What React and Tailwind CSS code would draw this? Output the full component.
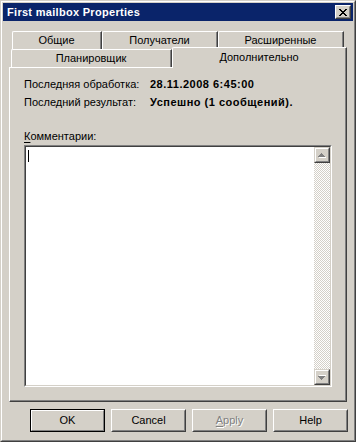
import React from 'react';

const CloseGlyph = () => {
  const px = [
    [0, 0], [1, 0], [6, 0], [7, 0],
    [1, 1], [2, 1], [5, 1], [6, 1],
    [2, 2], [3, 2], [4, 2], [5, 2],
    [3, 3], [4, 3],
    [2, 4], [3, 4], [4, 4], [5, 4],
    [1, 5], [2, 5], [5, 5], [6, 5],
    [0, 6], [1, 6], [6, 6], [7, 6],
  ];
  return (
    <svg width="8" height="7" viewBox="0 0 8 7" shapeRendering="crispEdges">
      {px.map(([x, y]) => (
        <rect key={`${x}-${y}`} x={x} y={y} width="1" height="1" fill="#000" />
      ))}
    </svg>
  );
};

const Arrow = ({ down }) => (
  <svg width="8" height="5" viewBox="0 0 8 5" shapeRendering="crispEdges">
    <g transform={down ? 'translate(0,5) scale(1,-1)' : undefined}>
      <polygon points="4,1 8,5 1,5" fill="#ffffff" />
      <polygon points="3,0 7,4 0,4" fill="#808080" />
    </g>
  </svg>
);

const ScrollBtn = ({ down }) => (
  <div className="w-[16px] h-[16px] border border-t-[#d4d0c8] border-l-[#d4d0c8] border-r-[#404040] border-b-[#404040]">
    <div className="h-full bg-[#d4d0c8] flex items-center justify-center border border-t-white border-l-white border-r-[#808080] border-b-[#808080]">
      <Arrow down={down} />
    </div>
  </div>
);

const Button = ({ children, def, disabled }) => (
  <div
    className={`w-[75px] h-[23px] border ${
      def
        ? 'border-black'
        : 'border-t-white border-l-white border-r-[#404040] border-b-[#404040]'
    }`}
  >
    <div
      className={`h-full flex items-center justify-center border ${
        def
          ? 'border-t-white border-l-white border-r-[#808080] border-b-[#808080]'
          : 'border-t-[#d4d0c8] border-l-[#d4d0c8] border-r-[#808080] border-b-[#808080]'
      } ${disabled ? 'text-[#808080] [text-shadow:1px_1px_0_#ffffff]' : 'text-black'}`}
    >
      {children}
    </div>
  </div>
);

const Tab = ({ label, w }) => (
  <div
    className={`${w} h-[18px] flex border-t border-l border-t-white border-l-white border-r border-r-[#404040] rounded-tl-[2px]`}
  >
    <div className="flex-1 flex items-center justify-center border-r border-r-[#808080] pb-[1px]">
      {label}
    </div>
  </div>
);

export default function App() {
  return (
    <div className="w-[356px] h-[442px] bg-[#d4d0c8] font-['Liberation_Sans',Arial,sans-serif] text-[11px] leading-[13px] text-black">
      <div className="h-full border border-t-[#d4d0c8] border-l-[#d4d0c8] border-r-[#404040] border-b-[#404040]">
        <div className="h-full border border-t-white border-l-white border-r-[#808080] border-b-[#808080] p-[1px] flex flex-col">
          {/* title bar */}
          <div className="h-[18px] bg-[#0a246a] flex items-center justify-between pl-[4px] pr-[2px]">
            <span className="text-white font-bold tracking-[0.3px]">First mailbox Properties</span>
            <div className="w-[16px] h-[14px] border border-t-white border-l-white border-r-[#404040] border-b-[#404040]">
              <div className="h-full bg-[#d4d0c8] flex items-center justify-center border border-t-[#d4d0c8] border-l-[#d4d0c8] border-r-[#808080] border-b-[#808080]">
                <CloseGlyph />
              </div>
            </div>
          </div>

          {/* tabs */}
          <div className="px-[6px] pt-[10px]">
            <div className="flex pl-[3px]">
              <Tab label="Общие" w="w-[90px]" />
              <Tab label="Получатели" w="w-[116px]" />
              <Tab label="Расширенные" w="w-[126px]" />
            </div>
            <div className="flex items-start h-[18px] pl-[2px]">
              <Tab label="Планировщик" w="w-[161px]" />
              <div className="relative z-10 w-[175px] h-[21px] -mt-[2px] flex bg-[#d4d0c8] border-t border-l border-t-white border-l-white border-r border-r-[#404040] rounded-tl-[2px]">
                <div className="flex-1 flex items-center justify-center border-r border-r-[#808080] pb-[2px]">
                  Дополнительно
                </div>
              </div>
            </div>

            {/* panel */}
            <div className="h-[335px] border border-t-white border-l-white border-r-[#404040] border-b-[#404040]">
              <div className="h-full border-r border-b border-r-[#808080] border-b-[#808080] pt-[10px] pl-[14px] pr-[13px] flex flex-col">
                <div className="flex">
                  <span className="w-[126px]">Последняя обработка:</span>
                  <span className="font-bold tracking-[0.5px]">28.11.2008 6:45:00</span>
                </div>
                <div className="flex mt-[5px]">
                  <span className="w-[126px]">Последний результат:</span>
                  <span className="font-bold tracking-[0.5px]">Успешно (1 сообщений).</span>
                </div>
                <div className="mt-[21px]">
                  <span className="underline underline-offset-[2px]">К</span>омментарии:
                </div>
                <div className="mt-[2px] h-[242px] border border-t-[#808080] border-l-[#808080] border-r-white border-b-white">
                  <div className="h-full flex border border-t-[#404040] border-l-[#404040] border-r-[#d4d0c8] border-b-[#d4d0c8] bg-white">
                    <div className="flex-1 pl-[2px] pt-[3px]">
                      <div className="w-[1px] h-[12px] bg-black" />
                    </div>
                    <div className="w-[16px] flex flex-col">
                      <ScrollBtn />
                      <div className="flex-1 bg-[image:repeating-conic-gradient(#d4d0c8_0%_25%,#ffffff_0%_50%)] bg-[length:2px_2px]" />
                      <ScrollBtn down />
                    </div>
                  </div>
                </div>
              </div>
            </div>
          </div>

          {/* buttons */}
          <div className="flex justify-end gap-[6px] pr-[5px] mt-[7px]">
            <Button def>OK</Button>
            <Button>Cancel</Button>
            <Button disabled>
              <span>
                <span className="underline underline-offset-[2px]">A</span>pply
              </span>
            </Button>
            <Button>Help</Button>
          </div>
        </div>
      </div>
    </div>
  );
}
